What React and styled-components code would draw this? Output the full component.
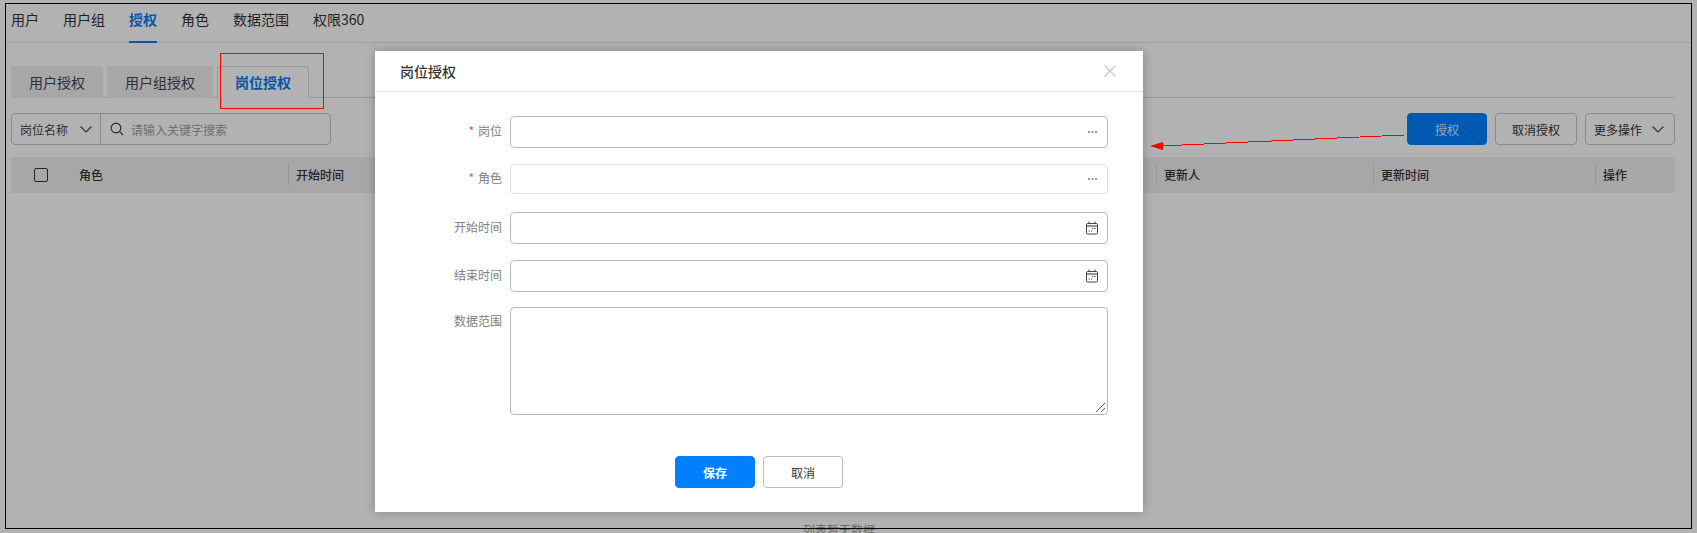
import React from "react";
import styled, { createGlobalStyle } from "styled-components";

const Global = createGlobalStyle`
  html, body { margin: 0; padding: 0; background: #fff; }
  #root { width: 1697px; height: 533px; overflow: hidden; }
  * { box-sizing: border-box; }
`;

const Page = styled.div`
  position: relative;
  width: 1697px;
  height: 533px;
  overflow: hidden;
  background: #fff;
  padding: 4px 6px 0;
  font-family: "Noto Sans CJK SC", "Liberation Sans", sans-serif;
  font-size: 13px;
  color: #333;
`;

const TopNav = styled.nav`
  display: flex;
  gap: 24px;
  height: 39px;
  padding-left: 5px;
  border-bottom: 1px solid #e4e4e4;
`;
const NavItem = styled.div`
  height: 39px;
  line-height: 30px;
  font-size: 14px;
  color: ${p => (p.$active ? "#0a7cf0" : "#333")};
  font-weight: ${p => (p.$active ? 700 : 400)};
  border-bottom: ${p => (p.$active ? "2px solid #0a7cf0" : "none")};
`;

const Section = styled.section`
  padding: 23px 16px 0 5px;
`;
const TabRow = styled.div`
  display: flex;
  gap: 4px;
  height: 32px;
  border-bottom: 1px solid #dcdcdc;
`;
const Tab = styled.div`
  height: 32px;
  padding: 0 17px;
  line-height: 30px;
  font-size: 14px;
  border-radius: 4px 4px 0 0;
  background: ${p => (p.$active ? "#fff" : "#f0f0f0")};
  border: ${p => (p.$active ? "1px solid #dcdcdc" : "1px solid #f0f0f0")};
  border-bottom: ${p => (p.$active ? "1px solid #fff" : "none")};
  color: ${p => (p.$active ? "#0a7cf0" : "#444")};
  font-weight: ${p => (p.$active ? 700 : 400)};
`;

const Toolbar = styled.div`
  display: flex;
  align-items: center;
  margin-top: 15px;
  height: 32px;
`;
const SearchGroup = styled.div`
  display: flex;
  width: 320px;
  height: 32px;
  border: 1px solid #c6c6c6;
  border-radius: 4px;
`;
const SearchSelect = styled.div`
  display: flex;
  align-items: center;
  justify-content: space-between;
  width: 89px;
  padding: 0 7px 0 8px;
  border-right: 1px solid #c6c6c6;
  font-size: 12px;
  color: #444;
`;
const SearchInput = styled.div`
  display: flex;
  align-items: center;
  gap: 7px;
  padding-left: 9px;
  font-size: 12px;
  color: #a0a0a0;
`;
const Actions = styled.div`
  margin-left: auto;
  display: flex;
  gap: 8px;
`;
const ToolButton = styled.div`
  display: flex;
  align-items: center;
  justify-content: ${p => (p.$split ? "space-between" : "center")};
  padding: 0 ${p => (p.$split ? 9 : 0)}px 0 ${p => (p.$split ? 8 : 0)}px;
  height: 32px;
  width: ${p => p.$w}px;
  font-size: 12px;
  border-radius: 4px;
  border: 1px solid ${p => (p.$primary ? "#0082ff" : "#c6c6c6")};
  background: ${p => (p.$primary ? "#0082ff" : "#fff")};
  color: ${p => (p.$primary ? "#dbe9ff" : "#333")};
`;

const TableHead = styled.div`
  display: flex;
  align-items: center;
  margin-top: 12px;
  height: 36px;
  background: #f0f0f0;
  font-size: 12px;
  font-weight: 500;
  color: #333;
`;
const CheckCell = styled.div`
  width: 68px;
  padding-left: 23px;
`;
const Check = styled.div`
  width: 14px;
  height: 14px;
  border: 1px solid #333;
  border-radius: 2px;
`;
const HeadCell = styled.div`
  width: ${p => p.$w}px;
  padding-left: ${p => (p.$first ? 0 : 7)}px;
  flex: none;
  border-left: ${p => (p.$first ? "none" : "1px solid #d8d8d8")};
  line-height: 22px;
`;
const Empty = styled.div`
  margin-top: 328px;
  padding-right: 8px;
  text-align: center;
  font-size: 12px;
  color: #999;
`;

const Overlay = styled.div`
  position: absolute;
  inset: 0;
  background: rgba(0, 0, 0, 0.3);
`;
const Modal = styled.div`
  position: absolute;
  left: 375px;
  top: 51px;
  width: 768px;
  height: 461px;
  background: #fff;
  box-shadow: 0 0 10px rgba(0, 0, 0, 0.25);
  display: flex;
  flex-direction: column;
`;
const ModalHead = styled.div`
  display: flex;
  align-items: center;
  justify-content: space-between;
  height: 41px;
  margin: 0 0 0 1px;
  padding: 0 27px 0 24px;
  border-bottom: 1px solid #e2e2e2;
  font-size: 14px;
  font-weight: 500;
  color: #333;
`;
const ModalBody = styled.div`
  display: flex;
  flex-direction: column;
  gap: 16px;
  padding: 24px 35px 0 0;
`;
const FormRow = styled.div`
  display: flex;
  align-items: ${p => (p.$top ? "flex-start" : "center")};
  margin-bottom: ${p => p.$after || 0}px;
`;
const Label = styled.label`
  width: 127px;
  margin-right: 8px;
  padding-bottom: ${p => (p.$top ? 0 : 2)}px;
  flex: none;
  text-align: right;
  font-size: 12px;
  line-height: 16px;
  color: #808080;
  padding-top: ${p => (p.$top ? 6 : 0)}px;
`;
const Star = styled.span`
  color: #ff4d4f;
  margin-right: 4px;
`;
const Field = styled.div`
  position: relative;
  flex: 1;
  display: flex;
  align-items: center;
  justify-content: flex-end;
  height: ${p => p.$h || 32}px;
  padding-right: ${p => p.$pad || 8}px;
  border: 1px solid ${p => (p.$disabled ? "#dedede" : "#b8b8b8")};
  border-radius: 4px;
`;
const Grip = styled.svg`
  position: absolute;
  right: 1px;
  bottom: 1px;
`;
const ModalFoot = styled.div`
  display: flex;
  justify-content: center;
  gap: 8px;
  margin-top: 41px;
`;
const FootButton = styled.div`
  display: flex;
  align-items: center;
  justify-content: center;
  width: 80px;
  height: 32px;
  border-radius: 4px;
  font-size: 12px;
  border: 1px solid ${p => (p.$primary ? "#0080ff" : "#bdbdbd")};
  background: ${p => (p.$primary ? "#0080ff" : "#fff")};
  color: ${p => (p.$primary ? "#fff" : "#333")};
  font-weight: ${p => (p.$primary ? 700 : 400)};
`;

const ScreenFrame = styled.div`
  position: absolute;
  left: 5px;
  top: 3px;
  width: 1687px;
  height: 526px;
  border: 1px solid #000;
  pointer-events: none;
`;
const RedBox = styled.div`
  position: absolute;
  left: 220px;
  top: 53px;
  width: 104px;
  height: 56px;
  border: 1px solid #f00;
`;
const ArrowLayer = styled.svg`
  position: absolute;
  left: 1140px;
  top: 125px;
`;

const Chevron = ({ size = 14, color = "#444" }) => (
  <svg width={size} height={size} viewBox="0 0 14 14" fill="none" stroke={color} strokeWidth="1.1">
    <path d="M1.5 4.5 7 10l5.5-5.5" />
  </svg>
);
const Search = () => (
  <svg width="14" height="14" viewBox="0 0 14 14" fill="none" stroke="#333" strokeWidth="1.1">
    <circle cx="6" cy="6" r="4.9" />
    <path d="M9.6 9.6 13 13" />
  </svg>
);
const Close = () => (
  <svg width="12" height="12" viewBox="0 0 12 12" fill="none" stroke="#c4c4c4" strokeWidth="1.1">
    <path d="M.5.5l11 11M11.5.5l-11 11" />
  </svg>
);
const Dots = () => (
  <svg width="9" height="2" viewBox="0 0 9 2" fill="#999" style={{ marginRight: 2 }}>
    <rect x="0" width="2" height="2" />
    <rect x="3.5" width="2" height="2" />
    <rect x="7" width="2" height="2" />
  </svg>
);
const Calendar = () => (
  <svg width="14" height="14" viewBox="0 0 14 14" fill="none" stroke="#444" strokeWidth="1">
    <rect x="1.5" y="2.5" width="11" height="10.5" rx="1.2" />
    <path d="M4 .5v2.5M10 .5v2.5" />
    <path d="M2 5h10" strokeWidth="1.8" stroke="#888" />
    <path d="M7 7.5h1.2M9.4 7.5h1.2M3.6 10h1.2M6 10h1.2" />
  </svg>
);

const columns = [
  { t: "开始时间", w: 868 },
  { t: "更新人", w: 217 },
  { t: "更新时间", w: 222 },
  { t: "操作", w: 80 },
];

export default function App() {
  return (
    <Page>
      <Global />
      <TopNav>
        <NavItem>用户</NavItem>
        <NavItem>用户组</NavItem>
        <NavItem $active>授权</NavItem>
        <NavItem>角色</NavItem>
        <NavItem>数据范围</NavItem>
        <NavItem>权限360</NavItem>
      </TopNav>
      <Section>
        <TabRow>
          <Tab>用户授权</Tab>
          <Tab>用户组授权</Tab>
          <Tab $active>岗位授权</Tab>
        </TabRow>
        <Toolbar>
          <SearchGroup>
            <SearchSelect>岗位名称<Chevron /></SearchSelect>
            <SearchInput><Search />请输入关键字搜索</SearchInput>
          </SearchGroup>
          <Actions>
            <ToolButton $primary $w={80}>授权</ToolButton>
            <ToolButton $w={82}>取消授权</ToolButton>
            <ToolButton $split $w={90}>更多操作<Chevron /></ToolButton>
          </Actions>
        </Toolbar>
        <TableHead>
          <CheckCell><Check /></CheckCell>
          <HeadCell $first $w={209}>角色</HeadCell>
          {columns.map(c => <HeadCell key={c.t} $w={c.w}>{c.t}</HeadCell>)}
        </TableHead>
        <Empty>列表暂无数据</Empty>
      </Section>
      <Overlay />
      <Modal>
        <ModalHead>岗位授权<Close /></ModalHead>
        <ModalBody>
          <FormRow>
            <Label><Star>*</Star>岗位</Label>
            <Field><Dots /></Field>
          </FormRow>
          <FormRow $after={2}>
            <Label><Star>*</Star>角色</Label>
            <Field $disabled $h={30}><Dots /></Field>
          </FormRow>
          <FormRow>
            <Label>开始时间</Label>
            <Field><Calendar /></Field>
          </FormRow>
          <FormRow $after={-1}>
            <Label>结束时间</Label>
            <Field><Calendar /></Field>
          </FormRow>
          <FormRow $top>
            <Label $top>数据范围</Label>
            <Field $h={108}>
              <Grip width="11" height="11" viewBox="0 0 11 11" fill="none" stroke="#555" strokeWidth="1">
                <path d="M1 10 10 1M6 10l4-4" />
              </Grip>
            </Field>
          </FormRow>
        </ModalBody>
        <ModalFoot>
          <FootButton $primary>保存</FootButton>
          <FootButton>取消</FootButton>
        </ModalFoot>
      </Modal>
      <RedBox />
      <ArrowLayer width="270" height="30" viewBox="0 0 270 30">
        <path d="M264 10 20 21" stroke="#f00" strokeWidth="1" fill="none" shapeRendering="crispEdges" />
        <path d="M10 21l13-4v8z" fill="#f00" />
      </ArrowLayer>
      <ScreenFrame />
    </Page>
  );
}
